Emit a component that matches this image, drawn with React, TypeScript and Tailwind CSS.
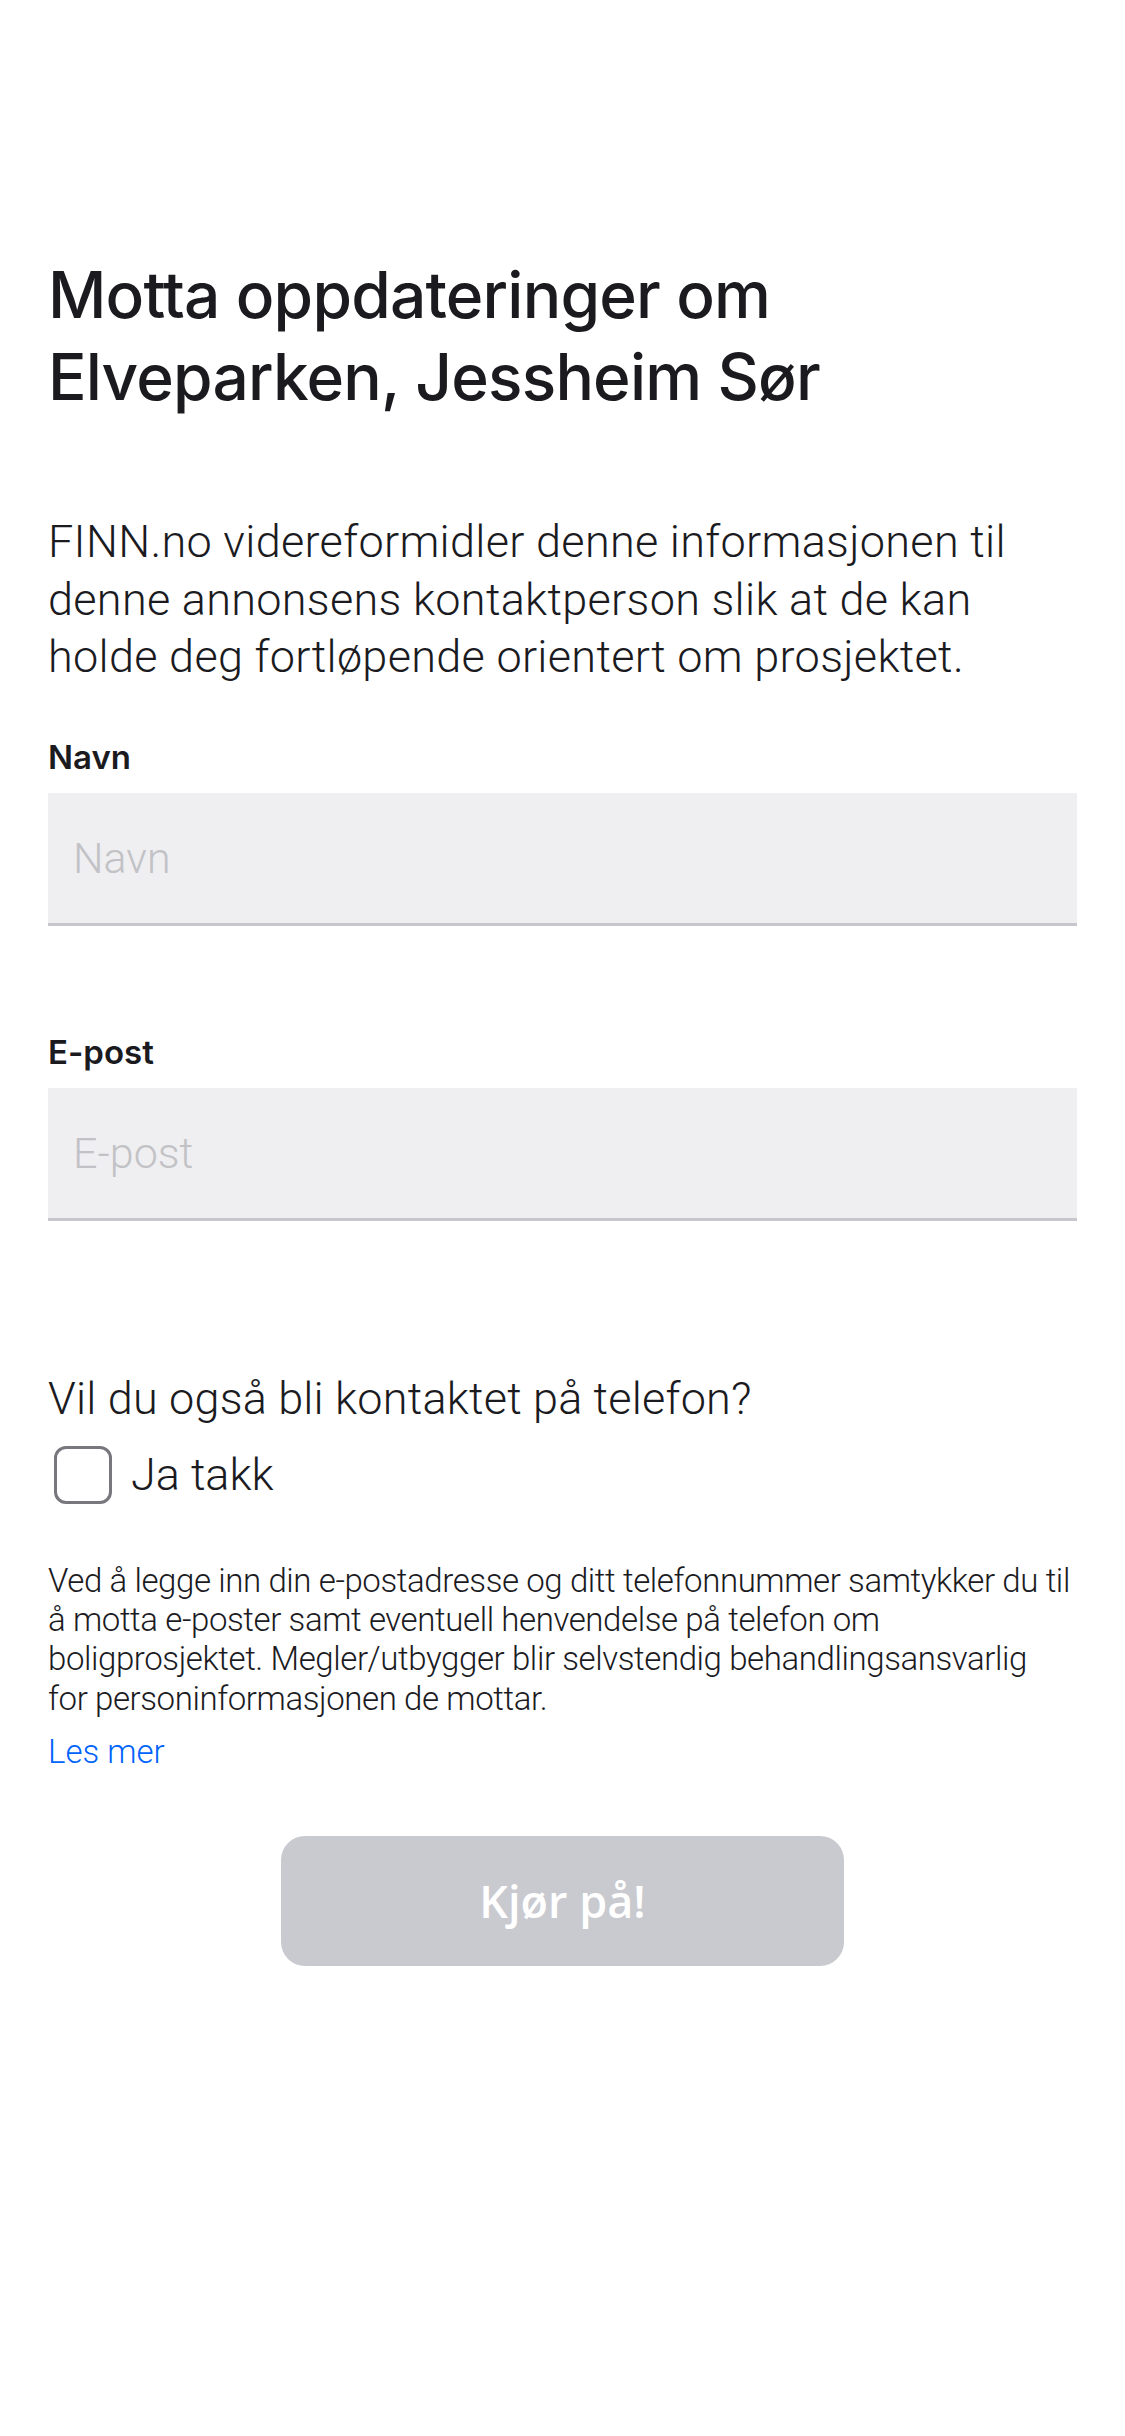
export default function App() {
    return (
        <main className="min-h-screen bg-white px-[48px] pt-[254px] pb-24 text-[#1b1b1f] font-['Inter',sans-serif]">
            <h1 className="text-[64px] font-medium leading-[82px] tracking-[-0.8px]">
                Motta oppdateringer om Elveparken, Jessheim Sør
            </h1>

            <p className="mt-[95px] font-['Roboto',sans-serif] text-[45px] font-light leading-[57.5px] tracking-[0.3px]">
                FINN.no videreformidler denne informasjonen til denne annonsens kontaktperson slik at de kan holde deg fortløpende orientert om prosjektet.
            </p>

            <form className="mt-[51px]">
                <label className="block">
                    <span className="block text-[33px] font-semibold leading-[40px]">Navn</span>
                    <input
                        type="text"
                        placeholder="Navn"
                        className="mt-[16px] block h-[133px] w-full border-b-[3px] border-[#c6c6cc] bg-[#efeff1] px-[25px] font-['Roboto',sans-serif] text-[43px] font-light outline-none placeholder:text-[#c2c2c6]"
                    />
                </label>

                <label className="mt-[106px] block">
                    <span className="block text-[33px] font-semibold leading-[40px]">E-post</span>
                    <input
                        type="email"
                        placeholder="E-post"
                        className="mt-[16px] block h-[133px] w-full border-b-[3px] border-[#c6c6cc] bg-[#efeff1] px-[25px] font-['Roboto',sans-serif] text-[43px] font-light outline-none placeholder:text-[#c2c2c6]"
                    />
                </label>

                <p className="mt-[149px] font-['Roboto',sans-serif] text-[45px] font-light leading-[57px] tracking-[0.2px]">
                    Vil du også bli kontaktet på telefon?
                </p>

                <label className="mt-[18px] flex h-[60px] items-center gap-[19px] pl-[6px]">
                    <span className="h-[58px] w-[58px] rounded-[12px] border-[3px] border-[#77777d] bg-white" />
                    <span className="font-['Roboto',sans-serif] text-[45px] font-light">Ja takk</span>
                </label>

                <p className="mt-[56px] font-['Roboto',sans-serif] text-[33px] font-light leading-[39.4px] tracking-[-0.4px]">
                    Ved å legge inn din e-postadresse og ditt telefonnummer samtykker du til å motta e-poster samt eventuell henvendelse på telefon om boligprosjektet. Megler/utbygger blir selvstendig behandlingsansvarlig for&nbsp;personinformasjonen de mottar.
                </p>
                <a href="#" className="mt-[14px] block font-['Roboto',sans-serif] text-[33px] font-light leading-[40px] text-[#0063fb]">
                    Les mer
                </a>

                <div className="mt-[64px] flex justify-center">
                    <button
                        type="submit"
                        disabled
                        className="h-[130px] w-[563px] rounded-[24px] bg-[#c9cad0] font-['Open_Sans',sans-serif] text-[45px] font-semibold text-white"
                    >
                        Kjør på!
                    </button>
                </div>
            </form>
        </main>
    );
}
